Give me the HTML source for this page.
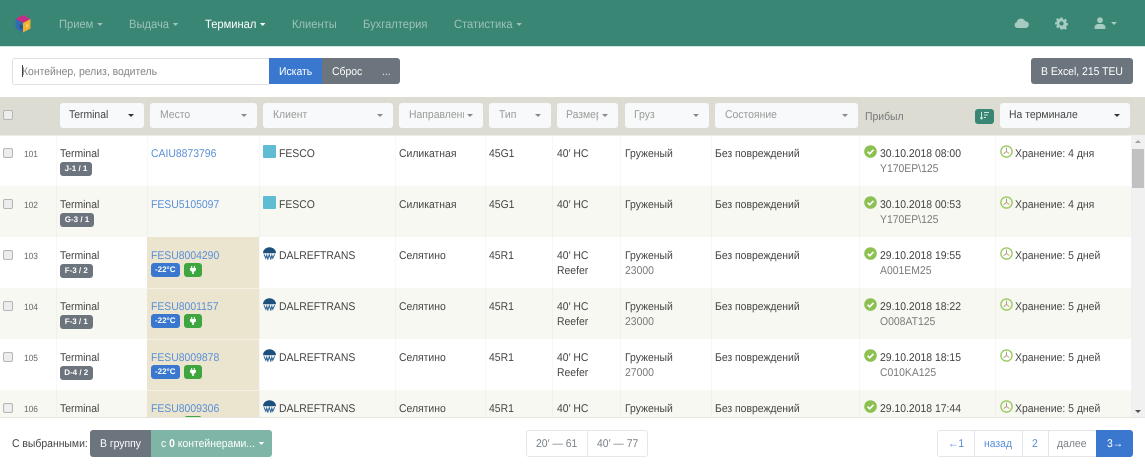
<!DOCTYPE html>
<html lang="ru"><head><meta charset="utf-8"><title>Терминал</title>
<style>
html,body{margin:0;padding:0;background:#fff}
#p{position:relative;width:1145px;height:470px;overflow:hidden;font-family:"Liberation Sans",sans-serif;font-size:11.2px;color:#444;background:#fff;filter:blur(.3px);text-rendering:geometricPrecision}
#p div,#p span.a,#p svg{position:absolute}
.t{white-space:nowrap;line-height:14px;transform:scaleX(.93);transform-origin:0 50%}
.nav{top:17px;font-size:12px;color:#9cc2b9;white-space:nowrap;line-height:14px;transform:scaleX(.93);transform-origin:0 50%}
.car{display:inline-block;width:0;height:0;border:3.5px solid transparent;border-top-color:currentColor;border-bottom:0;vertical-align:2px;margin-left:4px}
.f{top:103px;height:25px;background:#f8f9fa;border-radius:3px;line-height:25.5px;color:#999;white-space:nowrap;overflow:hidden;padding-left:9.5px;box-sizing:border-box}
.f u{display:inline-block;text-decoration:none;vertical-align:top;overflow:hidden;transform:scaleX(.93);transform-origin:0 50%}
.f i{position:absolute;right:10px;top:11px;width:0;height:0;border:3.2px solid transparent;border-top-color:#8a8a8a;border-bottom:0}
.f.d{color:#444}.f.d i{border-top-color:#333}
.r{left:0;width:1131px;height:51px;background:#fff;overflow:hidden}
.r.e{background:#f8f8f2}
.s{top:0;width:1px;height:51px;background:rgba(0,0,0,.028)}
.cb{left:3px;top:13px;width:8px;height:8px;border:1px solid #b5b5b5;border-radius:2px;background:#ededed}
.n{left:24px;top:12px;font-size:9px;color:#666;line-height:14px;transform:scaleX(.93);transform-origin:0 50%}
.x1{top:12px}.x2{top:27px}
.b{top:27px;height:14px;line-height:14px;border-radius:3px;background:#6c757d;color:#fff;font-size:8px;font-weight:bold;text-align:center;white-space:nowrap}
.l{color:#5a8fd8}
.g{color:#7b7b7b}
.cell{left:147px;top:0;width:112px;height:51px;background:#ebe5cf}
</style></head><body><div id="p">
<svg width="0" height="0" style="left:0;top:0"><defs>
<symbol id="ok" viewBox="0 0 13 13"><circle cx="6.5" cy="6.5" r="6.3" fill="#8cc152"/><path d="M3.6 6.7l2.1 2.1 3.8-4" fill="none" stroke="#fff" stroke-width="1.7"/></symbol>
<symbol id="cl" viewBox="0 0 13 13"><circle cx="6.5" cy="6.5" r="5.6" fill="none" stroke="#9ccb63" stroke-width="1.4"/><path d="M6.5 2.6v3.9" stroke="#9aa58a" stroke-width="1"/><path d="M6.5 6.5L3.6 8.6" stroke="#9aa58a" stroke-width="1"/><path d="M6.5 6.5L9.4 8.6" stroke="#e89a6a" stroke-width="1"/></symbol>
<symbol id="dr" viewBox="0 0 13 13"><path d="M0 6.2A6.5 6 0 0 1 13 6.2z" fill="#1d4f7c"/><path d="M1 7.2l1.8 4 1-3 1 4 1.5-4.6 1.5 4.6 1-4 1 3 1.8-4" fill="none" stroke="#2a6496" stroke-width="1"/></symbol>
<symbol id="pl" viewBox="0 0 6 8"><path d="M1.2 0h1v2h1.6V0h1v2H6v2.2L3.8 6v2H2.2V6L0 4.2V2h1.2z" fill="#fff"/></symbol>
</defs></svg>

<!-- nav -->
<div style="left:0;top:0;width:1145px;height:45.5px;background:#3a8674"></div>
<div style="left:0;top:45.5px;width:1145px;height:1px;background:#d3e5df"></div>
<svg style="left:14px;top:14px" width="18" height="20" viewBox="0 0 18 20"><path d="M9 1l7.5 4L9 9 1.5 5z" fill="#c72c86"/><path d="M1.5 5L9 9v9.5L1.5 14.5z" fill="#2f6db3"/><path d="M16.5 5L9 9v9.5l7.5-4z" fill="#eeb230"/><path d="M5.5 10l3 1.5v4l-3-1.5z" fill="#24548c"/><path d="M12 10.5l2.2-1.2v3.5L12 14z" fill="#f5cd6b"/></svg>
<div class="nav" style="left:58.5px">Прием<span class="car"></span></div>
<div class="nav" style="left:128.5px">Выдача<span class="car"></span></div>
<div class="nav" style="left:204.5px;color:#fff">Терминал<span class="car"></span></div>
<div class="nav" style="left:292px">Клиенты</div>
<div class="nav" style="left:363px">Бухгалтерия</div>
<div class="nav" style="left:453.5px">Статистика<span class="car"></span></div>
<svg style="left:1014px;top:17px" width="15" height="12" viewBox="0 0 15 12"><path d="M3.4 11A3 3 0 0 1 2.6 5.2 4.6 4.6 0 0 1 11.2 4.2 3.4 3.4 0 0 1 11.6 11z" fill="#a6cbc1"/></svg>
<svg style="left:1054.5px;top:17px" width="13" height="13" viewBox="0 0 24 24"><path fill="#a6cbc1" fill-rule="evenodd" d="M10 1h4l.6 3.2 2 .9 2.7-1.8 2.8 2.8-1.8 2.7.9 2 3.1.6v4l-3.1.6-.9 2 1.8 2.7-2.8 2.8-2.7-1.8-2 .9L14 23h-4l-.6-3.2-2-.9-2.7 1.8-2.8-2.8 1.8-2.7-.9-2L0 14v-4l2.8-.6.9-2-1.8-2.7 2.8-2.8 2.7 1.8 2-.9zM12 8a4 4 0 1 0 0 8 4 4 0 0 0 0-8z"/></svg>
<svg style="left:1094px;top:17px" width="12" height="12" viewBox="0 0 12 12"><circle cx="6" cy="3.2" r="2.9" fill="#a6cbc1"/><path d="M.6 12V10A3.6 3.4 0 0 1 4 7h4a3.6 3.4 0 0 1 3.4 3v2z" fill="#a6cbc1"/></svg>
<div style="left:1111px;top:22px;width:0;height:0;border:3.5px solid transparent;border-top-color:#a6cbc1;border-bottom:0"></div>

<!-- search -->
<div style="left:12px;top:58px;width:255.5px;height:25px;border:1px solid #dfe2e5;border-right:0;border-radius:3px 0 0 3px;background:#fff"></div>
<div class="t" style="left:22px;top:65px;color:#808488">Контейнер, релиз, водитель</div>
<div style="left:22px;top:65px;width:1px;height:12px;background:#444"></div>
<div style="left:268.5px;top:58px;width:53px;height:26px;background:#3a78d0"></div>
<div style="left:321.5px;top:58px;width:78.5px;height:26px;background:#6c757d;border-radius:0 3px 3px 0"></div>
<div class="t" style="left:278.5px;top:65px;color:#fff">Искать</div>
<div class="t" style="left:331.5px;top:65px;color:#fff">Сброс</div>
<div class="t" style="left:381.5px;top:65px;color:#e8e8e8">...</div>
<div style="left:1031px;top:58px;width:102px;height:26px;background:#6c757d;border-radius:3px"></div>
<div class="t" style="left:1041px;top:64.5px;color:#fff">В Excel, 215 TEU</div>

<!-- filters -->
<div style="left:0;top:97px;width:1145px;height:38px;background:#dcdcd3"></div>
<div class="cb" style="top:110px"></div>
<div class="f d" style="left:59.5px;width:84px"><u>Terminal</u><i></i></div>
<div class="f" style="left:150px;width:107px"><u>Место</u><i></i></div>
<div class="f" style="left:263px;width:129.5px"><u>Клиент</u><i></i></div>
<div class="f" style="left:399px;width:84px"><u style="width:59px">Направление</u><i></i></div>
<div class="f" style="left:489px;width:61.5px"><u>Тип</u><i></i></div>
<div class="f" style="left:556.5px;width:61.5px"><u style="width:35px">Размер</u><i></i></div>
<div class="f" style="left:624.5px;width:84px"><u>Груз</u><i></i></div>
<div class="f" style="left:715px;width:143px"><u>Состояние</u><i></i></div>
<div class="t" style="left:864.5px;top:110px;color:#777">Прибыл</div>
<div style="left:975px;top:108.5px;width:18.5px;height:15px;border-radius:3px;background:#3a8674"></div>
<svg style="left:980px;top:112px" width="9" height="8" viewBox="0 0 9 8"><path d="M1.5 0v7M0 5.5L1.5 7 3 5.5" stroke="#cfe3dd" fill="none"/><path d="M4 .5h5M4 3h3.6M4 5.5h2" stroke="#cfe3dd"/></svg>
<div class="f d" style="left:999.5px;width:130px"><u>На терминале</u><i></i></div>

<!-- rows -->
<div class="r" style="top:135px"><div class="s" style="left:56px"></div><div class="s" style="left:146.5px"></div><div class="s" style="left:259px"></div><div class="s" style="left:394.5px"></div><div class="s" style="left:485px"></div><div class="s" style="left:552px"></div><div class="s" style="left:620px"></div><div class="s" style="left:710.5px"></div><div class="s" style="left:859px"></div><div class="s" style="left:995px"></div>
<div class="cb"></div><div class="n">101</div><div class="t x1" style="left:60px">Terminal</div><div class="b" style="left:60px;width:32px">J-1 / 1</div>
<div class="t x1 l" style="left:150.5px">CAIU8873796</div>
<div style="left:263px;top:10px;width:13px;height:13px;background:#5fbcd3;border-radius:1px"></div><div class="t x1" style="left:279px">FESCO</div>
<div class="t x1" style="left:399px">Силикатная</div><div class="t x1" style="left:489px">45G1</div><div class="t x1" style="left:557px">40′ HC</div><div class="t x1" style="left:625px">Груженый</div><div class="t x1" style="left:715px">Без повреждений</div>
<svg style="left:863.5px;top:10px" width="13" height="13"><use href="#ok"/></svg><div class="t x1" style="left:879.5px">30.10.2018 08:00</div><div class="t x2 g" style="left:879.5px">Y170EP\125</div>
<svg style="left:999.5px;top:10px" width="13" height="13"><use href="#cl"/></svg><div class="t x1" style="left:1015px">Хранение: 4 дня</div></div>

<div class="r e" style="top:186px"><div class="s" style="left:56px"></div><div class="s" style="left:146.5px"></div><div class="s" style="left:259px"></div><div class="s" style="left:394.5px"></div><div class="s" style="left:485px"></div><div class="s" style="left:552px"></div><div class="s" style="left:620px"></div><div class="s" style="left:710.5px"></div><div class="s" style="left:859px"></div><div class="s" style="left:995px"></div>
<div class="cb"></div><div class="n">102</div><div class="t x1" style="left:60px">Terminal</div><div class="b" style="left:60px;width:34px">G-3 / 1</div>
<div class="t x1 l" style="left:150.5px">FESU5105097</div>
<div style="left:263px;top:10px;width:13px;height:13px;background:#5fbcd3;border-radius:1px"></div><div class="t x1" style="left:279px">FESCO</div>
<div class="t x1" style="left:399px">Силикатная</div><div class="t x1" style="left:489px">45G1</div><div class="t x1" style="left:557px">40′ HC</div><div class="t x1" style="left:625px">Груженый</div><div class="t x1" style="left:715px">Без повреждений</div>
<svg style="left:863.5px;top:10px" width="13" height="13"><use href="#ok"/></svg><div class="t x1" style="left:879.5px">30.10.2018 00:53</div><div class="t x2 g" style="left:879.5px">Y170EP\125</div>
<svg style="left:999.5px;top:10px" width="13" height="13"><use href="#cl"/></svg><div class="t x1" style="left:1015px">Хранение: 4 дня</div></div>

<div class="r" style="top:237px"><div class="s" style="left:56px"></div><div class="s" style="left:146.5px"></div><div class="s" style="left:259px"></div><div class="s" style="left:394.5px"></div><div class="s" style="left:485px"></div><div class="s" style="left:552px"></div><div class="s" style="left:620px"></div><div class="s" style="left:710.5px"></div><div class="s" style="left:859px"></div><div class="s" style="left:995px"></div>
<div class="cb"></div><div class="n">103</div><div class="t x1" style="left:60px">Terminal</div><div class="b" style="left:60px;width:32.5px">F-3 / 2</div>
<div class="cell"></div><div class="t x1 l" style="left:150.5px">FESU8004290</div><div class="b" style="left:150.5px;top:26px;width:29.5px;background:#3a78d0">-22°C</div><div class="b" style="left:183.5px;top:26px;width:18px;background:#3fa63f"><svg style="left:6px;top:3px" width="6" height="8"><use href="#pl"/></svg></div>
<svg style="left:263px;top:10px" width="13" height="13"><use href="#dr"/></svg><div class="t x1" style="left:279px">DALREFTRANS</div>
<div class="t x1" style="left:399px">Селятино</div><div class="t x1" style="left:489px">45R1</div><div class="t x1" style="left:557px">40′ HC</div><div class="t x2" style="left:557px">Reefer</div><div class="t x1" style="left:625px">Груженый</div><div class="t x2 g" style="left:625px">23000</div><div class="t x1" style="left:715px">Без повреждений</div>
<svg style="left:863.5px;top:10px" width="13" height="13"><use href="#ok"/></svg><div class="t x1" style="left:879.5px">29.10.2018 19:55</div><div class="t x2 g" style="left:879.5px">A001EM25</div>
<svg style="left:999.5px;top:10px" width="13" height="13"><use href="#cl"/></svg><div class="t x1" style="left:1015px">Хранение: 5 дней</div></div>

<div class="r e" style="top:288px"><div class="s" style="left:56px"></div><div class="s" style="left:146.5px"></div><div class="s" style="left:259px"></div><div class="s" style="left:394.5px"></div><div class="s" style="left:485px"></div><div class="s" style="left:552px"></div><div class="s" style="left:620px"></div><div class="s" style="left:710.5px"></div><div class="s" style="left:859px"></div><div class="s" style="left:995px"></div>
<div class="cb"></div><div class="n">104</div><div class="t x1" style="left:60px">Terminal</div><div class="b" style="left:60px;width:32.5px">F-3 / 1</div>
<div class="cell"></div><div class="t x1 l" style="left:150.5px">FESU8001157</div><div class="b" style="left:150.5px;top:26px;width:29.5px;background:#3a78d0">-22°C</div><div class="b" style="left:183.5px;top:26px;width:18px;background:#3fa63f"><svg style="left:6px;top:3px" width="6" height="8"><use href="#pl"/></svg></div>
<svg style="left:263px;top:10px" width="13" height="13"><use href="#dr"/></svg><div class="t x1" style="left:279px">DALREFTRANS</div>
<div class="t x1" style="left:399px">Селятино</div><div class="t x1" style="left:489px">45R1</div><div class="t x1" style="left:557px">40′ HC</div><div class="t x2" style="left:557px">Reefer</div><div class="t x1" style="left:625px">Груженый</div><div class="t x2 g" style="left:625px">23000</div><div class="t x1" style="left:715px">Без повреждений</div>
<svg style="left:863.5px;top:10px" width="13" height="13"><use href="#ok"/></svg><div class="t x1" style="left:879.5px">29.10.2018 18:22</div><div class="t x2 g" style="left:879.5px">O008AT125</div>
<svg style="left:999.5px;top:10px" width="13" height="13"><use href="#cl"/></svg><div class="t x1" style="left:1015px">Хранение: 5 дней</div></div>

<div class="r" style="top:339px"><div class="s" style="left:56px"></div><div class="s" style="left:146.5px"></div><div class="s" style="left:259px"></div><div class="s" style="left:394.5px"></div><div class="s" style="left:485px"></div><div class="s" style="left:552px"></div><div class="s" style="left:620px"></div><div class="s" style="left:710.5px"></div><div class="s" style="left:859px"></div><div class="s" style="left:995px"></div>
<div class="cb"></div><div class="n">105</div><div class="t x1" style="left:60px">Terminal</div><div class="b" style="left:60px;width:32.5px">D-4 / 2</div>
<div class="cell"></div><div class="t x1 l" style="left:150.5px">FESU8009878</div><div class="b" style="left:150.5px;top:26px;width:29.5px;background:#3a78d0">-22°C</div><div class="b" style="left:183.5px;top:26px;width:18px;background:#3fa63f"><svg style="left:6px;top:3px" width="6" height="8"><use href="#pl"/></svg></div>
<svg style="left:263px;top:10px" width="13" height="13"><use href="#dr"/></svg><div class="t x1" style="left:279px">DALREFTRANS</div>
<div class="t x1" style="left:399px">Селятино</div><div class="t x1" style="left:489px">45R1</div><div class="t x1" style="left:557px">40′ HC</div><div class="t x2" style="left:557px">Reefer</div><div class="t x1" style="left:625px">Груженый</div><div class="t x2 g" style="left:625px">27000</div><div class="t x1" style="left:715px">Без повреждений</div>
<svg style="left:863.5px;top:10px" width="13" height="13"><use href="#ok"/></svg><div class="t x1" style="left:879.5px">29.10.2018 18:15</div><div class="t x2 g" style="left:879.5px">C010KA125</div>
<svg style="left:999.5px;top:10px" width="13" height="13"><use href="#cl"/></svg><div class="t x1" style="left:1015px">Хранение: 5 дней</div></div>

<div class="r e" style="top:390px;height:27px"><div class="s" style="left:56px"></div><div class="s" style="left:146.5px"></div><div class="s" style="left:259px"></div><div class="s" style="left:394.5px"></div><div class="s" style="left:485px"></div><div class="s" style="left:552px"></div><div class="s" style="left:620px"></div><div class="s" style="left:710.5px"></div><div class="s" style="left:859px"></div><div class="s" style="left:995px"></div>
<div class="cb"></div><div class="n">106</div><div class="t x1" style="left:60px">Terminal</div>
<div class="cell"></div><div class="t x1 l" style="left:150.5px">FESU8009306</div><div class="b" style="left:183.5px;top:26px;width:18px;background:#3fa63f"></div>
<svg style="left:263px;top:10px" width="13" height="13"><use href="#dr"/></svg><div class="t x1" style="left:279px">DALREFTRANS</div>
<div class="t x1" style="left:399px">Селятино</div><div class="t x1" style="left:489px">45R1</div><div class="t x1" style="left:557px">40′ HC</div><div class="t x1" style="left:625px">Груженый</div><div class="t x1" style="left:715px">Без повреждений</div>
<svg style="left:863.5px;top:10px" width="13" height="13"><use href="#ok"/></svg><div class="t x1" style="left:879.5px">29.10.2018 17:44</div>
<svg style="left:999.5px;top:10px" width="13" height="13"><use href="#cl"/></svg><div class="t x1" style="left:1015px">Хранение: 5 дней</div></div>

<!-- row dividers -->
<div style="left:0;top:135px;width:1131px;height:1px;background:#eeeee8"></div>
<div style="left:147px;top:288px;width:112px;height:1px;background:#f4f0e2"></div>
<div style="left:147px;top:339px;width:112px;height:1px;background:#f4f0e2"></div>
<div style="left:147px;top:390px;width:112px;height:1px;background:#f4f0e2"></div>

<!-- scrollbar -->
<div style="left:1131px;top:135px;width:14px;height:282px;background:#f1f1f1"></div>
<div style="left:1132px;top:149px;width:12px;height:39px;background:#c1c1c1"></div>
<div style="left:1135px;top:140px;width:0;height:0;border:3px solid transparent;border-bottom-color:#a0a0a0;border-top:0"></div>
<div style="left:1135px;top:410px;width:0;height:0;border:3px solid transparent;border-top-color:#505050;border-bottom:0"></div>
<div style="left:0;top:416.5px;width:1145px;height:1px;background:#e6e6e0"></div>

<!-- bottom -->
<div class="t" style="left:12px;top:437px">С выбранными:</div>
<div style="left:90px;top:430px;width:61px;height:27px;background:#6c757d;border-radius:3px 0 0 3px"></div>
<div style="left:151px;top:430px;width:121px;height:27px;background:#7fb5a6;border-radius:0 3px 3px 0"></div>
<div class="t" style="left:100px;top:437px;color:#fff">В группу</div>
<div class="t" style="left:160.5px;top:437px;color:#fff">с <b>0</b> контейнерами...<span class="car"></span></div>

<div style="left:526px;top:430px;width:120px;height:25px;border:1px solid #e5e7e9;border-radius:3px"></div>
<div style="left:587px;top:431px;width:1px;height:25px;background:#e5e7e9"></div>
<div class="t" style="left:536px;top:437px;color:#7b8288">20′ — 61</div>
<div class="t" style="left:597px;top:437px;color:#7b8288">40′ — 77</div>

<div style="left:937px;top:430px;width:194px;height:25px;border:1px solid #e3e7eb;border-radius:3px"></div>
<div style="left:974px;top:431px;width:1px;height:25px;background:#e3e7eb"></div>
<div style="left:1022px;top:431px;width:1px;height:25px;background:#e3e7eb"></div>
<div style="left:1048px;top:431px;width:1px;height:25px;background:#e3e7eb"></div>
<div style="left:1096px;top:430px;width:37px;height:27px;background:#3a78d0;border-radius:0 3px 3px 0"></div>
<div class="t" style="left:947.5px;top:437px;color:#5a8fd8">←1</div>
<div class="t" style="left:984px;top:437px;color:#5a8fd8">назад</div>
<div class="t" style="left:1031.5px;top:437px;color:#5a8fd8">2</div>
<div class="t" style="left:1057px;top:437px;color:#7b8288">далее</div>
<div class="t" style="left:1107px;top:437px;color:#fff">3→</div>
</div></body></html>
